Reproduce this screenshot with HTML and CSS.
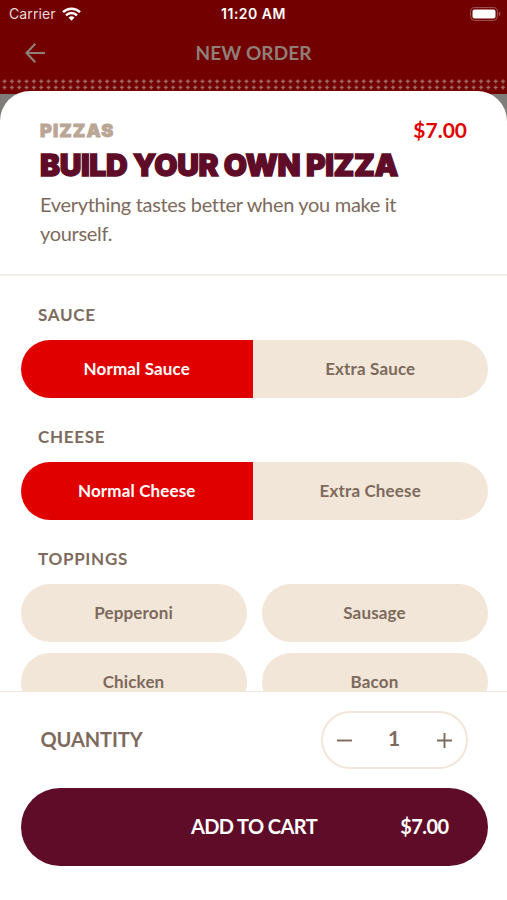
FILE: index.html
```html
<!DOCTYPE html>
<html lang="en">
<head>
  <meta charset="UTF-8" />
  <meta name="viewport" content="width=device-width, initial-scale=1.0"/>
  <title>New Order</title>
  <link rel="stylesheet" href="styles.css">
</head>
<body>

  <div class="app">

    <!-- Top bar -->
    <header class="top">
      <div class="status-bar">
        <div class="carrier">
          <span class="carrier-name">Carrier</span>
          <svg width="19" height="14" viewBox="0 0 19 14" fill="none" stroke="#fff" stroke-width="2.5">
            <path d="M1 5.1a12.2 12.2 0 0 1 17 0" />
            <path d="M4 8.3a7.9 7.9 0 0 1 11 0" />
            <path d="M6.5 10.6a4.3 4.3 0 0 1 6 0L9.5 13.7z" fill="#fff" stroke="none" />
          </svg>
        </div>
        <span class="time">11:20 AM</span>
        <svg class="battery" width="31" height="14" viewBox="0 0 31 14">
          <rect x="0.6" y="0.6" width="26.8" height="12.8" rx="4" fill="none" stroke="#a05858" />
          <rect x="2.5" y="2.5" width="23" height="9" rx="2" fill="#fff" />
          <path d="M28.8 4.800v4.400c1-.4 1.500-1.200 1.500-2.200s-.5-1.800-1.500-2.200z" fill="#a05858" />
        </svg>
      </div>
      <div class="nav-bar">
        <svg class="back" width="20" height="20" viewBox="0 0 20 20" fill="none" stroke="#8f7f78" stroke-width="2.1">
          <path d="M10.3 0.8L1.5 10l8.800 9.200M1.500 10H20" />
        </svg>
        <h1 class="nav-title">NEW ORDER</h1>
      </div>
      <svg class="dots" width="507" height="14">
        <defs>
          <pattern id="plus" x="0.9" y="0.6" width="7.33" height="6.1" patternUnits="userSpaceOnUse">
            <path d="M3.66 0.900v4M1.660 2.900h4" stroke="#a2736d" stroke-width="1.3" />
          </pattern>
        </defs>
        <rect y="0.6" width="507" height="12.2" fill="url(#plus)" />
      </svg>
    </header>

    <!-- Item sheet -->
    <main class="sheet">
      <section class="item">
        <div class="item-top">
          <span class="category">PIZZAS</span>
          <span class="price">$7.00</span>
        </div>
        <h2 class="item-name">BUILD YOUR OWN PIZZA</h2>
        <p class="description">Everything tastes better when you make it yourself.</p>
      </section>

      <section class="options">
        <h3 class="label">SAUCE</h3>
        <div class="toggle">
          <button class="choice selected">Normal Sauce</button>
          <button class="choice">Extra Sauce</button>
        </div>

        <h3 class="label label-cheese">CHEESE</h3>
        <div class="toggle">
          <button class="choice selected">Normal Cheese</button>
          <button class="choice">Extra Cheese</button>
        </div>

        <h3 class="label label-toppings">TOPPINGS</h3>
        <div class="toppings">
          <button class="choice">Pepperoni</button>
          <button class="choice">Sausage</button>
          <button class="choice">Chicken</button>
          <button class="choice">Bacon</button>
        </div>
      </section>

      <!-- Quantity and cart -->
      <footer class="footer">
        <div class="quantity">
          <span class="quantity-label">QUANTITY</span>
          <div class="stepper">
            <svg width="15" height="15" viewBox="0 0 15 15" stroke="#7d6a5c" stroke-width="1.9">
              <path d="M0 7.5h15" />
            </svg>
            <span class="count">1</span>
            <svg width="15" height="15" viewBox="0 0 15 15" stroke="#7d6a5c" stroke-width="1.9">
              <path d="M0 7.5h15M7.5 0v15" />
            </svg>
          </div>
        </div>
        <button class="add">
          <span class="add-text">ADD TO CART</span>
          <span class="add-price">$7.00</span>
        </button>
      </footer>
    </main>

  </div>

</body>
</html>
```
FILE: styles.css
```css
/* General page layout and font */
* {
  box-sizing: border-box;
}

body {
  margin: 0;
  font-family: Lato, "Liberation Sans", sans-serif;
  color: #7d6a5c;
}

h1, h2, h3, p {
  margin: 0;
}

button {
  border: none;
  padding: 0;
  font-family: inherit;
  cursor: pointer;
}

.app {
  display: flex;
  flex-direction: column;
  height: 900px;
  overflow: hidden;
  background: linear-gradient(#730000 94px, #7f7d7a 94px);
}

/* Top bar */
.top {
  flex: none;
  height: 91px;
}

.status-bar {
  display: grid;
  grid-template-columns: 1fr auto 1fr;
  align-items: center;
  height: 27px;
  padding: 0 6px;
  color: #fff;
  font-family: Inter, "Liberation Sans", sans-serif;
}

.carrier {
  display: flex;
  align-items: center;
  gap: 6px;
  padding-left: 3px;
}

.carrier-name {
  font-size: 14px;
  color: #eadada;
  letter-spacing: 0.1px;
}

.time {
  font-size: 14px;
  font-weight: 600;
  letter-spacing: 0.5px;
}

.battery {
  justify-self: end;
}

.nav-bar {
  display: grid;
  grid-template-columns: 60px 1fr 60px;
  align-items: center;
  height: 51px;
  color: #8f7f78;
}

.back {
  margin-left: 25px;
}

.nav-title {
  text-align: center;
  font-size: 19px;
  font-weight: 700;
  letter-spacing: 0.1px;
}

.dots {
  display: block;
}

/* Item sheet */
.sheet {
  display: flex;
  flex-direction: column;
  flex: 1;
  min-height: 0;
  background-color: #fff;
  border-radius: 30px 30px 0 0;
}

.item {
  flex: none;
  height: 185px;
  padding: 27px 40px 0;
  border-bottom: 2px solid #f3ede7;
}

.item-top {
  display: flex;
  justify-content: space-between;
  align-items: center;
  height: 24px;
}

.category {
  font-family: Inter, sans-serif;
  font-size: 18px;
  font-weight: 900;
  color: #b9a695;
  letter-spacing: 1.1px;
  -webkit-text-stroke: 0.8px #b9a695;
}

.price {
  padding-bottom: 2px;
  font-size: 21px;
  font-weight: 700;
  color: #e10000;
}

.item-name {
  font-family: Inter, sans-serif;
  font-size: 30px;
  font-weight: 900;
  line-height: 46px;
  white-space: nowrap;
  color: #5f0c28;
  letter-spacing: -0.35px;
  -webkit-text-stroke: 1.4px #5f0c28;
}

.description {
  width: 380px;
  margin-top: 2px;
  font-size: 20px;
  line-height: 29px;
  letter-spacing: -0.31px;
}

/* Options list, cut off by the footer */
.options {
  flex: 1;
  min-height: 0;
  overflow: hidden;
  padding: 26px 19.5px 0 20.5px;
}

.label {
  height: 24px;
  margin-bottom: 14px;
  padding-left: 17.5px;
  font-size: 17px;
  font-weight: 700;
  line-height: 25px;
  letter-spacing: 0.7px;
}

.label-cheese,
.label-toppings {
  margin-top: 26px;
}

.toggle {
  display: grid;
  grid-template-columns: 232.5px 1fr;
  height: 58px;
  border-radius: 29px;
  overflow: hidden;
}

.choice {
  padding-bottom: 2px;
  background-color: #f1e6d8;
  color: #7d6a5c;
  font-size: 17px;
  font-weight: 700;
  letter-spacing: 0.15px;
}

.selected {
  background-color: #e10000;
  color: #fff;
}

.toppings {
  display: grid;
  grid-template-columns: 1fr 1fr;
  grid-auto-rows: 58px;
  gap: 11px 15px;
}

.toppings .choice {
  border-radius: 29px;
}

/* Footer */
.footer {
  flex: none;
  height: 209px;
  padding: 19px 19.5px 0 20.5px;
  border-top: 1px solid #f1e6d8;
}

.quantity {
  display: flex;
  justify-content: space-between;
  align-items: center;
  padding: 0 20px;
}

.quantity-label {
  padding-bottom: 2px;
  font-size: 20px;
  font-weight: 700;
  letter-spacing: -0.1px;
}

.stepper {
  display: flex;
  justify-content: space-between;
  align-items: center;
  width: 147px;
  height: 58px;
  padding: 0 14px;
  border: 2px solid #f1e6d8;
  border-radius: 29px;
}

.count {
  font-size: 21px;
  font-weight: 700;
  line-height: 25px;
  padding-bottom: 6px;
}

.add {
  display: grid;
  grid-template-columns: 1fr auto 1fr;
  align-items: center;
  width: 100%;
  height: 78px;
  margin-top: 19px;
  padding: 0 39px 3px;
  border-radius: 39px;
  background-color: #5f0c28;
  color: #fff;
  font-size: 20px;
  font-weight: 700;
  letter-spacing: -0.6px;
}

.add-text {
  grid-column: 2;
}

.add-price {
  justify-self: end;
}
```
